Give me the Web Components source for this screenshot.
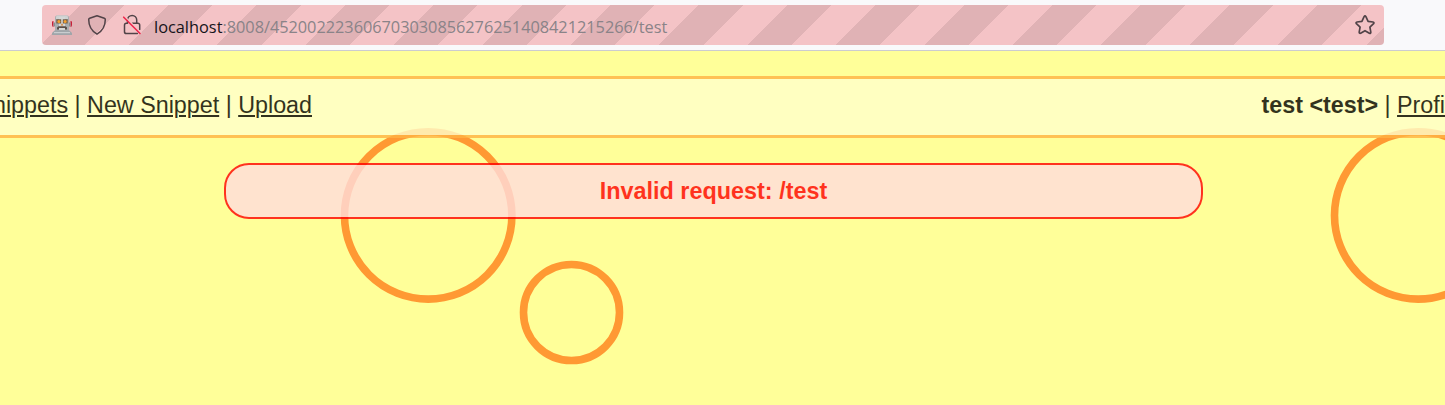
<!DOCTYPE html>
<html lang="en"><head><meta charset="utf-8"><title>Snippets</title>
<style>html,body{margin:0;height:100%;overflow:hidden}</style></head>
<body><app-window></app-window>
<script>
const define = (name, markup) => {
  const t = document.createElement('template');
  t.innerHTML = markup;
  customElements.define(name, class extends HTMLElement {
    constructor() {
      super();
      this.attachShadow({mode: 'open'}).append(t.content.cloneNode(true));
    }
  });
};

define('robot-icon', `<style>:host{display:block;width:20px;height:20px}svg{display:block}</style>
<svg width="20" height="20" viewBox="0 0 20 20">
<path d="M0 7q0-1 1.5-1V12Q0 12 0 10zM20 7q0-1-1.5-1V12Q20 12 20 10z" fill="#c81f38"/>
<path d="M1.5 7.5h2v4h-2zM16.500 7.500h2v4h-2z" fill="#8a8f92"/>
<path d="M3 2.500Q3 .5 5 .5h10q2 0 2 2V16H3z" fill="#a9adaf"/><path d="M5 .5h10q.8 0 1 1.500V4H4V2Q4.200.5 5 .5z" fill="#cfd2d2"/><path d="M7 2h6v13H7z" fill="#d5d7d6"/>
<path d="M4.300 4.300h4.900v4.200H4.300zM10.800 4.300h4.900v4.200h-4.900z" fill="#77604b"/><circle cx="6.900" cy="6.400" r="1.500" fill="#f3a02e"/><circle cx="13.100" cy="6.400" r="1.500" fill="#f3a02e"/>
<path d="M10 8.300l1.300 2.200H8.700z" fill="#d98232"/>
<path d="M5 14.500v-2l1.500-1.300h7l1.500 1.300v2h-2V13H7v1.500z" fill="#5b4f4a"/>
<path d="M2.500 15.500h15L20 18v2H0v-2z" fill="#a0a6aa"/><path d="M2 17h16v1.200H2z" fill="#c9cdcf"/></svg>`);

define('shield-icon', `<style>:host{display:block;width:20px;height:22px}svg{display:block}</style>
<svg width="20" height="22" viewBox="0 0 20 22" fill="none" stroke="#514348" stroke-width="1.5" stroke-linejoin="round"><path d="M10 1.7 17.3 4.2q1 .4 1 1.4C18.3 12 15.6 17 10 20.2 4.4 17 1.7 12 1.7 5.6q0-1 1-1.4Z"/></svg>`);

define('insecure-icon', `<style>:host{display:block;width:20px;height:22px}svg{display:block}</style>
<svg width="20" height="22" viewBox="0 0 20 22" fill="none" stroke-linecap="round"><g stroke="#514348" stroke-width="1.5"><path d="M5.5 9.2V6.1a4.6 4.6 0 0 1 9.2 0v3.2h1.200a1.8 1.8 0 0 1 1.8 1.8v4.300M10.500 9.300h4.200M5.500 9.300H4.400a1.900 1.900 0 0 0-1.900 1.900v6.500a1.900 1.900 0 0 0 1.900 1.900h11"/></g><path d="M2.500 2.200 19 18.700" stroke="#f4c3c6" stroke-width="1.400"/><path d="M1.700 3.200 18 19.500" stroke="#ed274c" stroke-width="1.600"/></svg>`);

define('star-icon', `<style>:host{display:block;width:22px;height:22px}svg{display:block}</style>
<svg width="22" height="22" viewBox="0 0 22 22" fill="none" stroke="#514348" stroke-width="1.7" stroke-linejoin="round"><path d="M10.1 2.600q.9-1.500 1.800 0L14.100 7.300l4.900.7q1.500.4.6 1.700l-3.700 3.500.9 5q0 1.500-1.400 1L11 16.700l-4.400 2.500q-1.400.4-1.400-1l.9-5L2.400 9.700q-.9-1.300.6-1.700L7.900 7.300Z"/></svg>`);

define('address-bar', `<style>
:host{display:flex;box-sizing:border-box;height:51px;padding:5px 61px 5px 42px;background:#f9f9fb;border-bottom:1px solid #ccccd0}
.field{flex:1;box-sizing:border-box;display:flex;align-items:center;border-radius:4px;padding:0 8px 0 10px;font:16.35px "Open Sans",sans-serif;
background:repeating-linear-gradient(135deg,#f4c3c6 0 27px,#e0b2b5 27px 58.25px,#f4c3c6 58.25px 62.5px)}
.url{flex:1;margin-left:12px;color:#8a8388;white-space:nowrap;padding-top:4px}
b{font-weight:400;color:#15141a}.path{letter-spacing:-.04px}
shield-icon{margin-left:15px}insecure-icon{margin-left:15px}
</style><div class="field"><robot-icon></robot-icon><shield-icon></shield-icon><insecure-icon></insecure-icon>
<div class="url"><b>localhost</b><span class="path">:8008/452002223606703030856276251408421215266/test</span></div><star-icon></star-icon></div>`);

define('nav-strip', `<style>
:host{display:flex;justify-content:space-between;box-sizing:border-box;height:62px;align-items:center;padding-bottom:3px;background:#ffc;border:solid #ffb244;border-width:3px 0;opacity:.8;color:#000;white-space:nowrap;overflow:hidden}
.left{width:312px;display:flex;justify-content:flex-end}.right{width:183.500px}
</style><div class="left"><slot name="left"></slot></div><div class="right"><slot name="right"></slot></div>`);

define('nav-link', `<style>:host{display:inline}a{color:inherit;text-decoration:underline;text-decoration-thickness:2px;text-underline-offset:2px}</style><a href="#"><slot></slot></a>`);

define('error-notice', `<style>:host{display:flex;box-sizing:border-box;height:56px;margin:25px 242px 0 224px;align-items:center;justify-content:center;border:2px solid red;border-radius:25px;background:#fdd;color:red;opacity:.8;font-weight:bold;font-size:23.4px}</style><slot></slot>`);

define('circle-backdrop', `<style>:host{position:absolute;inset:0;display:block}svg{display:block}</style>
<svg width="1445" height="354" fill="none" stroke="#f93" stroke-width="7.6"><circle cx="428.2" cy="164.4" r="83.7"/><circle cx="571.5" cy="261.5" r="48"/><circle cx="1418.2" cy="164.4" r="83.7"/></svg>`);

define('snippet-page', `<style>:host{display:block;position:relative;flex:1;background:#ff9;overflow:hidden;font:23.3px "Liberation Sans",Arial,sans-serif}main{position:relative;padding-top:25px}</style>
<circle-backdrop></circle-backdrop>
<main><nav-strip><span slot="left"><nav-link>Snippets</nav-link> | <nav-link>New Snippet</nav-link> | <nav-link>Upload</nav-link></span><span slot="right"><b>test &lt;test&gt;</b> | <nav-link>Profile</nav-link></span></nav-strip>
<error-notice>Invalid request: /test</error-notice></main>`);

define('app-window', `<style>:host{display:flex;flex-direction:column;height:100vh;min-height:405px}</style><address-bar></address-bar><snippet-page></snippet-page>`);
</script></body></html>
